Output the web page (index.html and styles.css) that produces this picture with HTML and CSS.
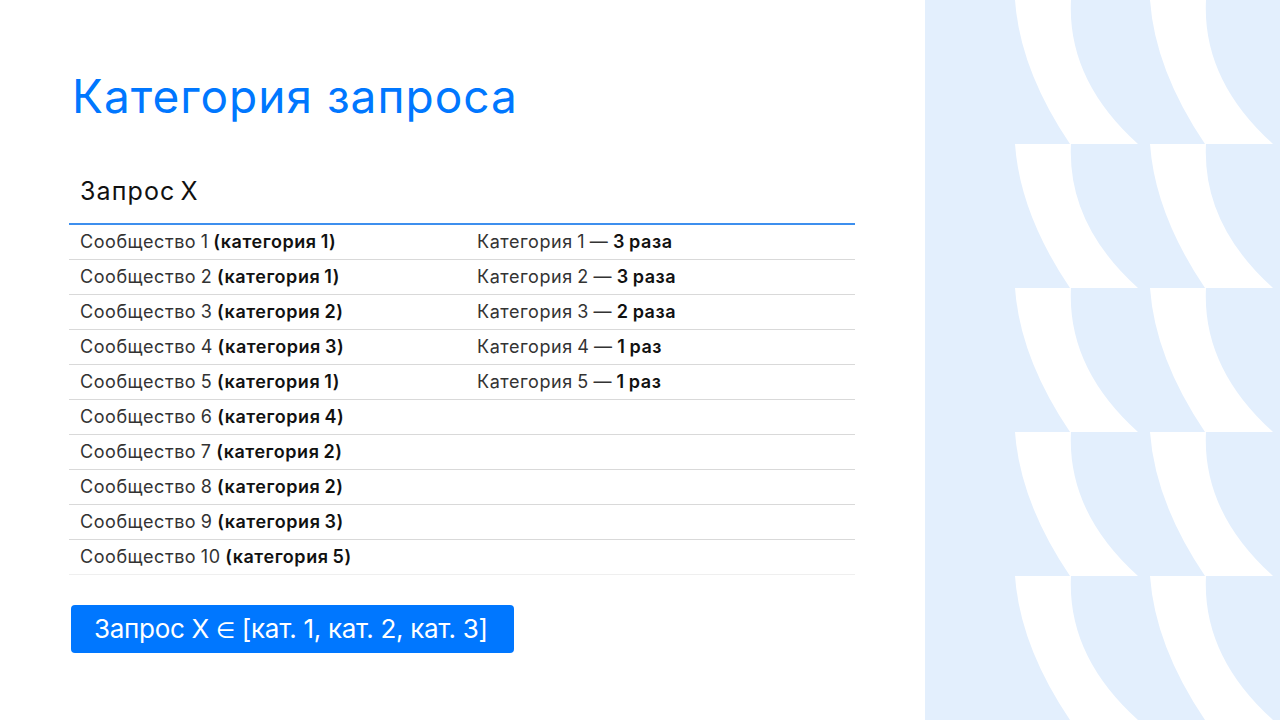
FILE: index.html
```html
<!DOCTYPE html>
<html lang="ru">
<head>
<meta charset="utf-8">
<title>Категория запроса</title>
<link rel="stylesheet" href="styles.css">
</head>
<body>
<div class="slide">
  <main class="content">
    <h1 class="title">Категория запроса</h1>
    <h2 class="subtitle">Запрос X</h2>
    <div class="table">
      <div class="row"><div class="cell">Сообщество 1 <b>(категория 1)</b></div><div class="cell">Категория 1 — <b>3 раза</b></div></div>
      <div class="row"><div class="cell">Сообщество 2 <b>(категория 1)</b></div><div class="cell">Категория 2 — <b>3 раза</b></div></div>
      <div class="row"><div class="cell">Сообщество 3 <b>(категория 2)</b></div><div class="cell">Категория 3 — <b>2 раза</b></div></div>
      <div class="row"><div class="cell">Сообщество 4 <b>(категория 3)</b></div><div class="cell">Категория 4 — <b>1 раз</b></div></div>
      <div class="row"><div class="cell">Сообщество 5 <b>(категория 1)</b></div><div class="cell">Категория 5 — <b>1 раз</b></div></div>
      <div class="row"><div class="cell">Сообщество 6 <b>(категория 4)</b></div><div class="cell"></div></div>
      <div class="row"><div class="cell">Сообщество 7 <b>(категория 2)</b></div><div class="cell"></div></div>
      <div class="row"><div class="cell">Сообщество 8 <b>(категория 2)</b></div><div class="cell"></div></div>
      <div class="row"><div class="cell">Сообщество 9 <b>(категория 3)</b></div><div class="cell"></div></div>
      <div class="row last"><div class="cell">Сообщество 10 <b>(категория 5)</b></div><div class="cell"></div></div>
    </div>
    <div class="result">Запрос X <span class="elem">∈</span> [кат. 1, кат. 2, кат. 3]</div>
  </main>
  <aside class="deco">
    <svg class="pattern" width="355" height="720" viewBox="0 0 355 720" xmlns="http://www.w3.org/2000/svg">
      <defs>
        <path id="band" d="M90 0 Q95 70 145 144 L213 144 Q142 80 146 0 Z" fill="#ffffff"/>
      </defs>
      <use href="#band" x="0" y="0"/><use href="#band" x="135" y="0"/>
      <use href="#band" x="0" y="144"/><use href="#band" x="135" y="144"/>
      <use href="#band" x="0" y="288"/><use href="#band" x="135" y="288"/>
      <use href="#band" x="0" y="432"/><use href="#band" x="135" y="432"/>
      <use href="#band" x="0" y="576"/><use href="#band" x="135" y="576"/>
    </svg>
  </aside>
</div>
</body>
</html>
```

FILE: styles.css
```css
* { box-sizing: border-box; }
html, body { margin: 0; padding: 0; }
body {
  font-family: Inter, "Noto Sans", "DejaVu Sans", sans-serif;
  background: #ffffff;
  color: #222;
}
.slide {
  width: 1280px;
  height: 720px;
  display: flex;
  overflow: hidden;
}
.content {
  width: 925px;
  padding: 66px 70px 0 69px;
  display: flex;
  flex-direction: column;
}
.title {
  margin: 0 0 0 3px;
  font-size: 46px;
  font-weight: 400;
  line-height: 60px;
  color: #0077ff;
  letter-spacing: 1px;
}
.subtitle {
  margin: 50px 0 0 11px;
  font-size: 25px;
  font-weight: 400;
  line-height: 30px;
  color: #111;
  letter-spacing: 1.1px;
  word-spacing: -3px;
}
.table {
  margin-top: 17px;
  border-top: 2px solid #3d8fee;
  width: 786px;
}
.row {
  display: grid;
  grid-template-columns: 397px 1fr;
  height: 35px;
  align-items: center;
  border-bottom: 1px solid #d9d9d9;
  font-size: 18px;
  color: #333;
}
.row.last { border-bottom-color: #efefef; }
.cell { padding-left: 11px; padding-bottom: 1px; white-space: nowrap; letter-spacing: 0.55px; word-spacing: -1px; }
.cell b { font-weight: 600; color: #111; }
.result {
  margin: 30px 0 0 2px;
  width: 443px;
  height: 48px;
  background: #0077ff;
  border-radius: 4px;
  color: #fff;
  font-size: 26px;
  line-height: 48px;
  padding-left: 23px;
  letter-spacing: -0.3px;
}
.elem { font-size: 22px; }
.deco {
  width: 355px;
  height: 720px;
  background: #e3effd;
}
.pattern { display: block; }
```
